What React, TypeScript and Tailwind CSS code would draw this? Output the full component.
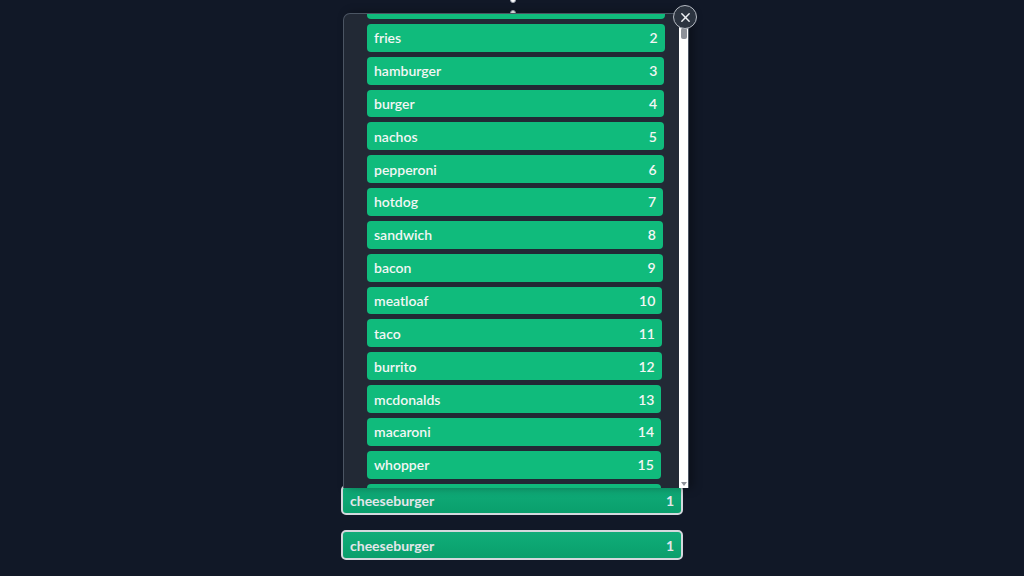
import React from 'react';

const foods = [
  'cheeseburger',
  'fries',
  'hamburger',
  'burger',
  'nachos',
  'pepperoni',
  'hotdog',
  'sandwich',
  'bacon',
  'meatloaf',
  'taco',
  'burrito',
  'mcdonalds',
  'macaroni',
  'whopper',
  'pizza',
];

const font = { fontFamily: 'Lato, "Open Sans", sans-serif' };

const DropCard = ({ name, count }: { name: string; count: number }) => (
  <div className="flex h-[30px] items-center justify-between rounded-[5px] border-2 border-[#d4d8dd] bg-gradient-to-b from-[#10ad79] to-[#0a9f6c] pl-[7px] pr-[7px] text-[14px] font-bold text-[#e3e6ea]">
    <span>{name}</span>
    <span>{count}</span>
  </div>
);

export default function App() {
  return (
    <div className="relative h-screen w-full overflow-hidden bg-[#111827]" style={font}>
      {/* column underneath the drag overlay */}
      <div className="mx-auto flex w-[342px] flex-col gap-[15px] pt-[485px]">
        <DropCard name="cheeseburger" count={1} />
        <DropCard name="cheeseburger" count={1} />
      </div>

      {/* resize handles peeking above the overlay */}
      <div className="absolute left-[510px] top-[-3px] h-[6px] w-[6px] rounded-full border border-[#9ca3af] bg-white" />
      <div className="absolute left-[510px] top-[10px] h-[6px] w-[6px] rounded-full border border-[#9ca3af] bg-white" />

      {/* dragged list overlay */}
      <div className="absolute left-[343px] top-[13px] h-[475px] w-[346px] overflow-hidden rounded-tl-[7px] rounded-tr-[4px] border border-b-0 border-[#4b5563] bg-[#222935] shadow-[4px_0_10px_rgba(0,0,0,0.35)]">
        <div className="-mt-[23px] flex flex-col gap-[5px] pl-[23px]">
          {foods.map((f, i) => (
            <div
              key={f}
              className="flex h-[27.85px] items-center justify-between rounded-[4px] bg-[#10bb7c] px-[7px] text-[14px] font-semibold text-[#f3f6f5]"
              style={{ width: 298 - i * 0.3 }}
            >
              <span>{f}</span>
              <span>{i + 1}</span>
            </div>
          ))}
        </div>

        {/* scrollbar */}
        <div className="absolute bottom-0 right-0 top-[11px] w-[9px] bg-white">
          <div className="mx-auto mt-[3px] h-[11px] w-[6px] rounded-[2px] bg-[#8d9199]" />
          <div className="absolute bottom-[2px] left-1/2 h-0 w-0 -translate-x-1/2 border-x-[3px] border-t-[4px] border-x-transparent border-t-[#8d9199]" />
        </div>
      </div>

      {/* close button */}
      <div className="absolute left-[673px] top-[5px] flex h-[24px] w-[24px] items-center justify-center rounded-full border border-[#b5bac2] bg-[#2c3440]">
        <svg width="11" height="11" viewBox="0 0 12 12" fill="none" stroke="#eef0f3" strokeWidth="1.6" strokeLinecap="round">
          <path d="M2 2L10 10M10 2L2 10" />
        </svg>
      </div>
    </div>
  );
}
